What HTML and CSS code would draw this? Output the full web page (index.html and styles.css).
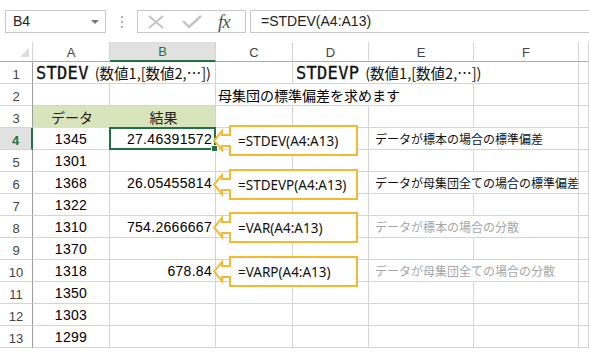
FILE: index.html
```html
<!DOCTYPE html>
<html lang="ja">
<head>
  <meta charset="UTF-8">
  <title>STDEV</title>
  <link rel="stylesheet" href="styles.css">
</head>
<body>
  <div class="formula-bar">
    <div class="name-box">B4<span class="drop"></span></div>
    <div class="grip"><i></i><i></i><i></i></div>
    <div class="fx-box">
      <svg class="ico" width="16" height="14" viewBox="0 0 16 14"><path d="M1 1 L15 13 M15 1 L1 13" stroke="#c4c4c4" stroke-width="2" fill="none"/></svg>
      <svg class="ico" width="20" height="14" viewBox="0 0 20 14"><path d="M1 6 L7 12 L19 1" stroke="#c4c4c4" stroke-width="2.4" fill="none"/></svg>
      <span class="fx">fx</span>
    </div>
    <div class="formula">=STDEV(A4:A13)</div>
  </div>

  <div class="sheet">
    <div class="row head">
      <div class="corner"><span class="tri"></span></div>
      <div class="ch">A</div>
      <div class="ch sel">B</div>
      <div class="ch">C</div>
      <div class="ch">D</div>
      <div class="ch">E</div>
      <div class="ch">F</div>
      <div class="ch"></div>
    </div>

    <div class="row">
      <div class="rh">1</div>
      <div class="c span2 title"><b>STDEV</b>(数値1,[数値2,…])</div>
      <div class="c"></div>
      <div class="c span2 open title"><b>STDEVP</b>(数値1,[数値2,…])</div>
      <div class="c"></div>
      <div class="c"></div>
    </div>

    <div class="row">
      <div class="rh">2</div>
      <div class="c"></div>
      <div class="c"></div>
      <div class="c span2 open jp">母集団の標準偏差を求めます</div>
      <div class="c"></div>
      <div class="c"></div>
      <div class="c"></div>
    </div>

    <div class="row">
      <div class="rh">3</div>
      <div class="c fill jp mid">データ</div>
      <div class="c fill jp mid">結果</div>
      <div class="c"></div>
      <div class="c"></div>
      <div class="c"></div>
      <div class="c"></div>
      <div class="c"></div>
    </div>

    <div class="row">
      <div class="rh active">4</div>
      <div class="c num mid">1345</div>
      <div class="c num right current">27.46391572</div>
      <div class="c"></div>
      <div class="c"></div>
      <div class="c span2 note">データが標本の場合の標準偏差</div>
      <div class="c"></div>
    </div>

    <div class="row">
      <div class="rh">5</div>
      <div class="c num mid">1301</div>
      <div class="c"></div><div class="c"></div><div class="c"></div><div class="c"></div><div class="c"></div><div class="c"></div>
    </div>

    <div class="row">
      <div class="rh">6</div>
      <div class="c num mid">1368</div>
      <div class="c num right">26.05455814</div>
      <div class="c"></div>
      <div class="c"></div>
      <div class="c span2 note">データが母集団全ての場合の標準偏差</div>
      <div class="c"></div>
    </div>

    <div class="row">
      <div class="rh">7</div>
      <div class="c num mid">1322</div>
      <div class="c"></div><div class="c"></div><div class="c"></div><div class="c"></div><div class="c"></div><div class="c"></div>
    </div>

    <div class="row">
      <div class="rh">8</div>
      <div class="c num mid">1310</div>
      <div class="c num right">754.2666667</div>
      <div class="c"></div>
      <div class="c"></div>
      <div class="c span2 note muted">データが標本の場合の分散</div>
      <div class="c"></div>
    </div>

    <div class="row">
      <div class="rh">9</div>
      <div class="c num mid">1370</div>
      <div class="c"></div><div class="c"></div><div class="c"></div><div class="c"></div><div class="c"></div><div class="c"></div>
    </div>

    <div class="row">
      <div class="rh">10</div>
      <div class="c num mid">1318</div>
      <div class="c num right">678.84</div>
      <div class="c"></div>
      <div class="c"></div>
      <div class="c span2 note muted">データが母集団全ての場合の分散</div>
      <div class="c"></div>
    </div>

    <div class="row">
      <div class="rh">11</div>
      <div class="c num mid">1350</div>
      <div class="c"></div><div class="c"></div><div class="c"></div><div class="c"></div><div class="c"></div><div class="c"></div>
    </div>

    <div class="row">
      <div class="rh">12</div>
      <div class="c num mid">1303</div>
      <div class="c"></div><div class="c"></div><div class="c"></div><div class="c"></div><div class="c"></div><div class="c"></div>
    </div>

    <div class="row">
      <div class="rh">13</div>
      <div class="c num mid">1299</div>
      <div class="c"></div><div class="c"></div><div class="c"></div><div class="c"></div><div class="c"></div><div class="c"></div>
    </div>

    <!-- callouts over the sheet -->
    <div class="callout c1">
      <svg width="146" height="32" viewBox="0 0 146 32"><polygon points="17,1 144,1 144,30 17,30 17,21 9,21 9,25 1,15.5 9,6 9,10 17,10"/></svg>
      <span>=STDEV(A4:A13)</span>
    </div>
    <div class="callout c2">
      <svg width="146" height="32" viewBox="0 0 146 32"><polygon points="17,1 144,1 144,30 17,30 17,21 9,21 9,25 1,15.5 9,6 9,10 17,10"/></svg>
      <span>=STDEVP(A4:A13)</span>
    </div>
    <div class="callout c3">
      <svg width="146" height="32" viewBox="0 0 146 32"><polygon points="17,1 144,1 144,30 17,30 17,21 9,21 9,25 1,15.5 9,6 9,10 17,10"/></svg>
      <span>=VAR(A4:A13)</span>
    </div>
    <div class="callout c4">
      <svg width="146" height="32" viewBox="0 0 146 32"><polygon points="17,1 144,1 144,30 17,30 17,21 9,21 9,25 1,15.5 9,6 9,10 17,10"/></svg>
      <span>=VARP(A4:A13)</span>
    </div>
  </div>
</body>
</html>
```

FILE: styles.css
```css
body {
  margin: 0;
  background: #fff;
  color: #000;
  font-family: "Liberation Sans", Arial, sans-serif;
  width: 589px;
  height: 355px;
  overflow: hidden;
}
.formula-bar {
  display: flex;
  align-items: center;
  height: 23px;
  padding-top: 10px;
}
.name-box {
  position: relative;
  box-sizing: border-box;
  width: 101px;
  height: 23px;
  margin-left: 5px;
  padding-left: 7px;
  border: 1px solid #c6c6c6;
  font-size: 14px;
  line-height: 21px;
  color: #222;
}
.drop {
  position: absolute;
  right: 6px;
  top: 9px;
  border-left: 4px solid transparent;
  border-right: 4px solid transparent;
  border-top: 4px solid #777;
}
.grip {
  display: flex;
  flex-direction: column;
  gap: 3px;
  margin: 0 14px 0 15px;
}
.grip i {
  display: block;
  width: 2px;
  height: 2px;
  background: #b0b0b0;
}
.fx-box {
  box-sizing: border-box;
  display: flex;
  align-items: center;
  width: 109px;
  height: 23px;
  padding-left: 10px;
  border: 1px solid #c6c6c6;
}
.fx-box .ico {
  margin-right: 18px;
}
.fx-box .ico + .ico {
  margin-right: 16px;
}
.fx {
  font-family: "Liberation Serif", serif;
  font-style: italic;
  font-size: 19px;
  color: #555;
  letter-spacing: -1px;
}
.formula {
  box-sizing: border-box;
  flex: 1;
  height: 23px;
  margin-left: 4px;
  padding-left: 10px;
  border: 1px solid #c6c6c6;
  border-right: none;
  font-size: 14px;
  line-height: 21px;
  color: #222;
}

.sheet {
  position: relative;
  margin-top: 9px;
}
.row {
  display: grid;
  grid-template-columns: 33px 77px 106px 77px 76px 105px 105px 1fr;
  height: 22px;
}
.row.head {
  height: 20px;
}
.corner, .ch, .rh, .c {
  box-sizing: border-box;
  border-right: 1px solid #d4d4d4;
  border-bottom: 1px solid #d4d4d4;
  white-space: nowrap;
  display: flex;
  align-items: center;
}
.corner {
  position: relative;
  border-bottom-color: #ababab;
}
.tri {
  position: absolute;
  right: 3px;
  bottom: 4px;
  border-left: 9px solid transparent;
  border-bottom: 9px solid #dcdcdc;
}
.ch {
  justify-content: center;
  font-size: 13px;
  color: #444;
  border-bottom-color: #ababab;
  padding-top: 1px;
}
.ch.sel {
  background: #e1e1e1;
  border-bottom: 2px solid #217346;
  color: #217346;
}
.rh {
  justify-content: center;
  font-size: 13px;
  color: #444;
  border-right-color: #9b9b9b;
  padding-top: 3px;
}
.rh.active {
  background: #e1e1e1;
  color: #217346;
  font-weight: bold;
  border-right: 2px solid #217346;
}
.span2 {
  grid-column: span 2;
}
.open {
  border-right-color: transparent;
  overflow: visible;
}
.title {
  padding-left: 3px;
  font-family: "Noto Sans CJK JP", sans-serif;
  font-size: 14.5px;
  color: #111;
}
.title b {
  font-family: "DejaVu Sans Mono", monospace;
  font-weight: normal;
  font-size: 17px;
  margin-right: 6px;
  letter-spacing: 0.3px;
  -webkit-text-stroke: 0.3px #111;
}
.jp {
  font-family: "Noto Sans CJK JP", sans-serif;
  font-size: 14px;
  padding-left: 2px;
}
.fill {
  background: #d8e4bc;
  border-right-color: #d8e4bc;
  border-bottom-color: #d8e4bc;
  color: #222;
}
.fill + .fill {
  border-right-color: #d4d4d4;
}
.mid {
  justify-content: center;
}
.num {
  font-size: 14px;
  padding-top: 1px;
  letter-spacing: 0.3px;
}
.right {
  justify-content: flex-end;
  padding-right: 3px;
}
.current {
  position: relative;
}
.current::after {
  content: "";
  position: absolute;
  left: -1px;
  top: -1px;
  right: -1px;
  bottom: -1px;
  border: 2px solid #217346;
}
.current::before {
  content: "";
  position: absolute;
  right: -3px;
  bottom: -3px;
  width: 5px;
  height: 5px;
  background: #217346;
  border: 1px solid #fff;
  z-index: 1;
}
.note {
  font-family: "Noto Sans CJK JP", sans-serif;
  font-size: 12px;
  padding-left: 6px;
  color: #111;
}
.note.muted {
  color: #a6a6a6;
}

.callout {
  position: absolute;
  left: 213px;
  width: 146px;
  height: 32px;
}
.callout svg {
  position: absolute;
  left: 0;
  top: 0;
}
.callout polygon {
  fill: #fff;
  stroke: #f5b82e;
  stroke-width: 2;
}
.callout span {
  position: absolute;
  left: 25px;
  top: 7px;
  font-family: "Noto Sans", sans-serif;
  font-size: 13.5px;
  color: #111;
}
.c1 { top: 83px; }
.c2 { top: 127px; }
.c3 { top: 170px; }
.c4 { top: 214px; }
```
